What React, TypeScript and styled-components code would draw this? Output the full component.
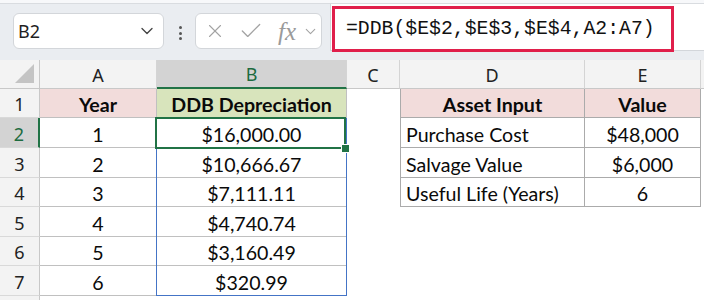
import React from 'react'
import styled, {createGlobalStyle} from "styled-components";
import {X, Check, ChevronDown} from "lucide-react";

const GlobalStyle = createGlobalStyle`
  html, body {
    margin: 0;
    padding: 0;
    background: #ffffff;
    overflow: hidden;
  }
  body {
    width: 704px;
    height: 300px;
  }
`

const COLS = [40, 117, 190, 53, 185, 116]
const ROWS = [29, 29, 30, 30, 29, 30, 29, 30, 30]

const Page = styled.div`
  width: 704px;
  height: 300px;
  overflow: hidden;
  font-family: Lato, "Liberation Sans", sans-serif;
`
const TopEdge = styled.div`
  height: 3px;
  background: #f7f8fa;
  border-bottom: 1px solid #d9dce0;
`
const Toolbar = styled.div`
  height: 56px;
  background: #eaedf1;
  display: flex;
  align-items: flex-start;
  padding-left: 13px;
  box-sizing: border-box;
`
const NameBox = styled.div`
  margin-top: 9px;
  width: 151px;
  height: 36px;
  box-sizing: border-box;
  background: #ffffff;
  border: 1px solid #d3d6da;
  border-radius: 6px;
  display: flex;
  align-items: center;
  justify-content: space-between;
  padding: 0 6px 0 4px;
  font-family: "Noto Sans", sans-serif;
  font-size: 18px;
  color: #1f1f1f;
`
const Dots = styled.div`
  margin: 22px 0 0 15px;
  display: flex;
  flex-direction: column;
  gap: 2.5px;

  span {
    width: 3px;
    height: 3px;
    border-radius: 50%;
    background: #555;
  }
`
const FuncBox = styled.div`
  margin: 9px 0 0 13px;
  width: 127px;
  height: 36px;
  box-sizing: border-box;
  background: #ffffff;
  border: 1px solid #d3d6da;
  border-radius: 6px;
  display: flex;
  align-items: center;
  padding-left: 8px;
  gap: 12px;
  color: #a3a3a3;
`
const Fx = styled.span`
  font-family: "Liberation Serif", serif;
  font-style: italic;
  font-size: 25px;
  color: #9a9a9a;
  margin-left: 2px;
  line-height: 1;
`
const FormulaBar = styled.div`
  margin-left: 8px;
  flex: 1;
  height: 47px;
  background: #ffffff;
  border-left: 1px solid #d3d6da;
  border-bottom: 1px solid #d3d6da;
  box-sizing: border-box;
  padding: 2px 0 0 1px;
`
const Highlight = styled.div`
  width: 342px;
  height: 46px;
  box-sizing: border-box;
  border: 3px solid #e01f4b;
  display: flex;
  align-items: center;
  padding-left: 11px;
  font-family: "Liberation Mono", monospace;
  font-size: 19.8px;
  color: #111;
`
const Sheet = styled.div`
  position: relative;
  display: grid;
  grid-template-columns: ${COLS.map(c => c + 'px').join(' ')} 1fr;
  grid-template-rows: ${ROWS.map(r => r + 'px').join(' ')};
`
const ColHead = styled.div<{ $active?: boolean }>`
  box-sizing: border-box;
  background: ${p => p.$active ? '#d3d3d3' : '#f3f3f3'};
  color: ${p => p.$active ? '#1d6b3f' : '#222'};
  border-right: 1px solid #d4d4d4;
  border-bottom: ${p => p.$active ? '2px solid #217346' : '1px solid #c8c8c8'};
  display: flex;
  align-items: center;
  justify-content: center;
  font-family: "Noto Sans", sans-serif;
  font-size: 18px;
  padding-top: 1px;
`
const Corner = styled(ColHead)`
  position: relative;
  border-right: 1px solid #c8c8c8;

  &::after {
    content: "";
    position: absolute;
    right: 5px;
    bottom: 5px;
    width: 0;
    height: 0;
    border-left: 19px solid transparent;
    border-bottom: 19px solid #c4c4c4;
  }
`
const RowHead = styled.div<{ $active?: boolean }>`
  box-sizing: border-box;
  background: ${p => p.$active ? '#d3d3d3' : '#f3f3f3'};
  color: ${p => p.$active ? '#1d6b3f' : '#222'};
  border-right: ${p => p.$active ? '2px solid #217346' : '1px solid #c8c8c8'};
  border-bottom: 1px solid #d9d9d9;
  display: flex;
  align-items: center;
  justify-content: center;
  font-family: "Noto Sans", sans-serif;
  font-size: 18px;
  padding-top: 2px;
`
const Cell = styled.div<{ $fill?: string, $line?: string, $left?: boolean, $align?: string, $bold?: boolean }>`
  box-sizing: border-box;
  background: ${p => p.$fill || '#ffffff'};
  border-right: ${p => p.$line ? `1px solid ${p.$line}` : 'none'};
  border-bottom: ${p => p.$line ? `1px solid ${p.$line}` : 'none'};
  border-left: ${p => p.$left && p.$line ? `1px solid ${p.$line}` : 'none'};
  display: flex;
  align-items: flex-end;
  justify-content: ${p => p.$align || 'center'};
  padding: 0 5px 2px;
  font-size: 19.6px;
  line-height: 1;
  font-weight: ${p => p.$bold ? 700 : 400};
  color: #0a0a0a;
  white-space: nowrap;
`
const Spill = styled.div`
  position: absolute;
  left: 156px;
  top: 58px;
  width: 191px;
  height: 178px;
  box-sizing: border-box;
  border: 1px solid #4474c6;
  pointer-events: none;
`
const Selection = styled.div`
  position: absolute;
  left: 155px;
  top: 57px;
  width: 191px;
  height: 32px;
  box-sizing: border-box;
  border: 2px solid #217346;
  pointer-events: none;

  &::after {
    content: "";
    position: absolute;
    right: -5px;
    bottom: -5px;
    width: 7px;
    height: 7px;
    background: #217346;
    outline: 1px solid #ffffff;
  }
`

const tableA = [['1', '$16,000.00'], ['2', '$10,666.67'], ['3', '$7,111.11'], ['4', '$4,740.74'], ['5', '$3,160.49'], ['6', '$320.99']]
const tableD = [['Purchase Cost', '$48,000'], ['Salvage Value', '$6,000'], ['Useful Life (Years)', '6']]
const GRAY = '#c0c0c0'
const DARK = '#ababab'

const App = () => {
    const rows = []
    for (let r = 1; r <= 8; r++) {
        const ab = r === 1 ? ['Year', 'DDB Depreciation'] : tableA[r - 2]
        const de = r === 1 ? ['Asset Input', 'Value'] : tableD[r - 2]
        rows.push(
            <React.Fragment key={r}>
                <RowHead $active={r === 2}>{r < 8 ? r : ''}</RowHead>
                {ab ? <>
                    <Cell $line={GRAY} $fill={r === 1 ? '#f2dcdb' : undefined} $bold={r === 1}>{ab[0]}</Cell>
                    <Cell $line={GRAY} $fill={r === 1 ? '#d8e4bc' : undefined} $bold={r === 1}>{ab[1]}</Cell>
                </> : <><Cell/><Cell/></>}
                <Cell/>
                {de ? <>
                    <Cell $line={DARK} $left $fill={r === 1 ? '#f2dcdb' : undefined} $bold={r === 1}
                          $align={r === 1 ? 'center' : 'flex-start'}>{de[0]}</Cell>
                    <Cell $line={DARK} $fill={r === 1 ? '#f2dcdb' : undefined} $bold={r === 1}>{de[1]}</Cell>
                </> : <><Cell/><Cell/></>}
                <Cell/>
            </React.Fragment>
        )
    }

    return (
        <Page>
            <GlobalStyle/>
            <TopEdge/>
            <Toolbar>
                <NameBox>
                    <span>B2</span>
                    <ChevronDown size={20} strokeWidth={1.6} color="#444"/>
                </NameBox>
                <Dots><span/><span/><span/></Dots>
                <FuncBox>
                    <X size={22} strokeWidth={1.2}/>
                    <Check size={26} strokeWidth={1.2}/>
                    <Fx>fx</Fx>
                    <ChevronDown size={17} strokeWidth={1.5} style={{marginLeft: -6}}/>
                </FuncBox>
                <FormulaBar>
                    <Highlight>=DDB($E$2,$E$3,$E$4,A2:A7)</Highlight>
                </FormulaBar>
            </Toolbar>
            <Sheet>
                <Corner/>
                {['A', 'B', 'C', 'D', 'E'].map(c =>
                    <ColHead key={c} $active={c === 'B'}>{c}</ColHead>
                )}
                <ColHead/>
                {rows}
                <Spill/>
                <Selection/>
            </Sheet>
        </Page>
    )
}

export default App
